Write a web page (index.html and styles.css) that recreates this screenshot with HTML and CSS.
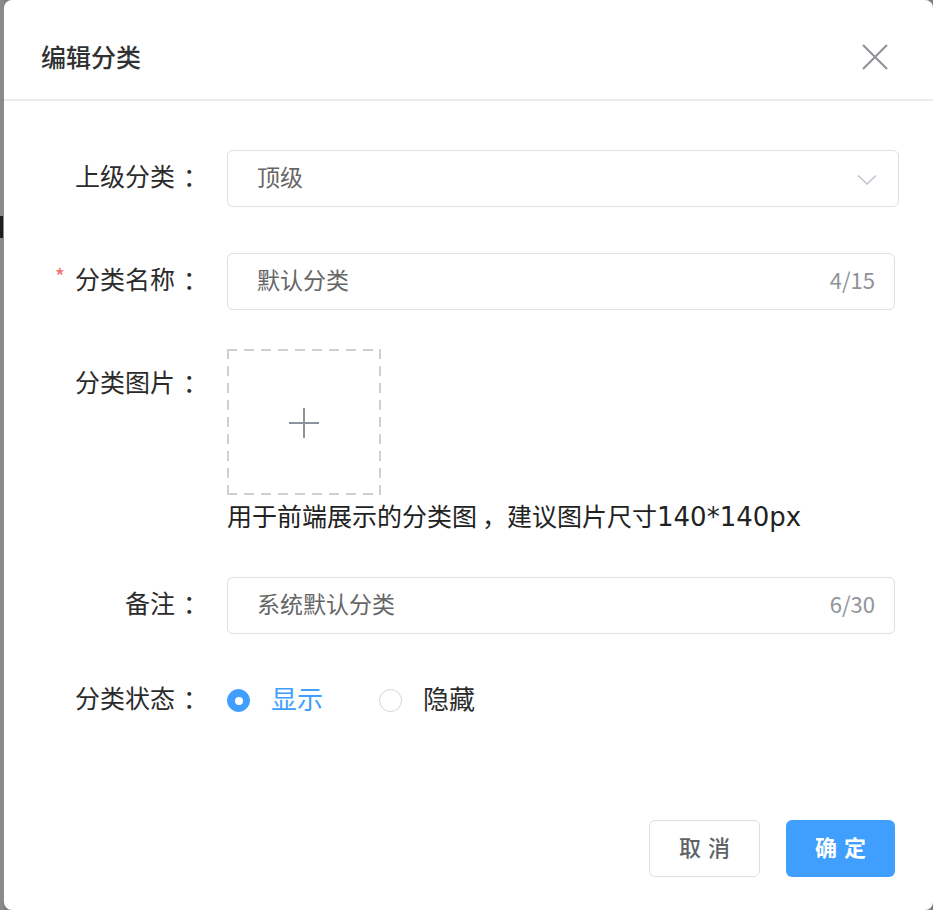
FILE: index.html
```html
<!DOCTYPE html>
<html lang="zh-CN">
<head>
<meta charset="utf-8">
<title>编辑分类</title>
<link rel="stylesheet" href="styles.css">
</head>
<body>
<div class="edge"><span class="edge-mark"></span></div>
<div class="dialog">
  <div class="dialog-header">
    <span class="dialog-title">编辑分类</span>
    <svg class="close" width="26" height="26" viewBox="0 0 26 26"><path d="M1 1 L25 25 M25 1 L1 25" stroke="#8e9096" stroke-width="2" fill="none"/></svg>
  </div>
  <div class="form">
    <div class="row">
      <div class="label">上级分类<span class="colon">：</span></div>
      <div class="select">
        <span class="value">顶级</span>
        <svg class="chevron" width="20" height="12" viewBox="0 0 20 12"><path d="M1 1.5 L10 10 L19 1.5" stroke="#c0c4cc" stroke-width="1.6" fill="none"/></svg>
      </div>
    </div>
    <div class="row row-2">
      <div class="label"><span class="req">*</span>分类名称<span class="colon">：</span></div>
      <div class="input">
        <span class="value">默认分类</span>
        <span class="count">4/15</span>
      </div>
    </div>
    <div class="row row-3">
      <div class="label label-top">分类图片<span class="colon">：</span></div>
      <div class="upload-wrap">
        <div class="upload">
          <svg width="32" height="32" viewBox="0 0 32 32"><path d="M16 1 V31 M1 16 H31" stroke="#8c939d" stroke-width="2" fill="none"/></svg>
        </div>
        <div class="hint">用于前端展示的分类图<span class="comma">，</span>建议图片尺寸<span class="latin">140*140px</span></div>
      </div>
    </div>
    <div class="row row-4">
      <div class="label">备注<span class="colon">：</span></div>
      <div class="input">
        <span class="value">系统默认分类</span>
        <span class="count">6/30</span>
      </div>
    </div>
    <div class="row row-5">
      <div class="label">分类状态<span class="colon">：</span></div>
      <div class="radios">
        <div class="radio checked"><span class="dot"></span><span class="radio-text">显示</span></div>
        <div class="radio"><span class="dot"></span><span class="radio-text">隐藏</span></div>
      </div>
    </div>
  </div>
  <div class="footer">
    <button class="btn btn-cancel">取消</button>
    <button class="btn btn-ok">确定</button>
  </div>
</div>
</body>
</html>
```

FILE: styles.css
```css
* { box-sizing: border-box; }
html, body { margin: 0; padding: 0; }
body {
  width: 933px;
  height: 910px;
  overflow: hidden;
  display: flex;
  background: #7d7d7d;
  font-family: "Noto Sans CJK SC", "Liberation Sans", sans-serif;
  color: #2b2b2b;
}
.edge {
  width: 4px;
  flex: none;
  display: flex;
  flex-direction: column;
  padding-top: 216px;
  background: #8a8a8a;
}
.edge-mark {
  display: block;
  width: 3px;
  height: 22px;
  background: #1e1e1e;
}
.dialog {
  flex: 1;
  height: 910px;
  background: #fff;
  border-radius: 8px;
  display: flex;
  flex-direction: column;
}
.dialog-header {
  height: 101px;
  flex: none;
  border-bottom: 2px solid #ebebeb;
  display: flex;
  align-items: center;
  justify-content: space-between;
  padding: 12px 45px 0 37px;
}
.dialog-title {
  font-size: 25px;
  color: #303133;
  font-weight: 500;
}
.close { display: block; margin-top: 2px; }
.form { padding-top: 49px; }
.row {
  display: flex;
  align-items: flex-start;
}
.row-2 { margin-top: 46px; }
.row-3 { margin-top: 39px; }
.row-4 { margin-top: 43px; }
.row-5 { margin-top: 38px; }
.label {
  width: 196px;
  height: 57px;
  flex: none;
  margin-right: 27px;
  text-align: right;
  font-size: 25px;
  line-height: 51px;
  color: #2b2b2b;
  white-space: nowrap;
}
.colon {
  display: inline-block;
  width: 25px;
  text-indent: 8px;
  text-align: left;
}
.label-top { padding-top: 7px; }
.req {
  color: #f56c6c;
  font-size: 22px;
  margin-right: 10px;
  position: relative;
  top: -4px;
}
.select, .input {
  height: 57px;
  border: 1.5px solid #dcdfe6;
  border-radius: 6px;
  display: flex;
  align-items: center;
  justify-content: space-between;
  padding: 0 19px 5px 29px;
}
.select { width: 672px; padding-right: 21px; }
.input { width: 668px; }
.value {
  font-size: 23px;
  color: #666;
}
.chevron { display: block; margin-top: 8px; }
.count {
  font-size: 22px;
  color: #909399;
}
.upload-wrap {
  display: flex;
  flex-direction: column;
}
.upload {
  width: 154px;
  height: 146px;
  display: flex;
  align-items: center;
  justify-content: center;
  background:
    repeating-linear-gradient(90deg, #cfcfcf 0 10px, transparent 10px 17px) top left / 100% 2px no-repeat,
    repeating-linear-gradient(90deg, #cfcfcf 0 10px, transparent 10px 17px) bottom left / 100% 2px no-repeat,
    repeating-linear-gradient(180deg, #cfcfcf 0 10px, transparent 10px 17px) top left / 2px 100% no-repeat,
    repeating-linear-gradient(180deg, #cfcfcf 0 10px, transparent 10px 17px) top right / 2px 100% no-repeat;
}
.upload svg { display: block; margin-top: 2px; }
.hint {
  margin-top: 1px;
  height: 38px;
  font-size: 25px;
  line-height: 38px;
  color: #222;
  white-space: nowrap;
}
.comma {
  display: inline-block;
  width: 30px;
  text-indent: 5px;
}
.latin {
  font-family: "DejaVu Sans", sans-serif;
  font-size: 26px;
  line-height: 1;
}
.radios {
  height: 57px;
  display: flex;
  align-items: center;
}
.radio {
  display: flex;
  align-items: center;
  gap: 21px;
}
.radio + .radio { margin-left: 56px; }
.dot {
  width: 23px;
  height: 23px;
  border-radius: 50%;
  border: 1.5px solid #d3d6dc;
  background: #fff;
  display: flex;
  align-items: center;
  justify-content: center;
}
.radio.checked .dot {
  background: #409eff;
  border-color: #409eff;
}
.radio.checked .dot::after {
  content: "";
  width: 8px;
  height: 8px;
  border-radius: 50%;
  background: #fff;
}
.radio-text {
  font-size: 26px;
  line-height: 30px;
  margin-top: -5px;
  color: #2b2b2b;
}
.radio.checked .radio-text { color: #409eff; }
.footer {
  margin-top: auto;
  display: flex;
  justify-content: flex-end;
  gap: 26px;
  padding: 0 38px 33px 0;
}
.btn {
  height: 57px;
  border-radius: 6px;
  font-family: "Noto Sans CJK SC", sans-serif;
  font-size: 22px;
  letter-spacing: 7px;
  padding: 0 0 5px 7px;
  cursor: pointer;
}
.btn-cancel {
  width: 111px;
  background: #fff;
  border: 1.5px solid #dcdfe6;
  color: #606266;
  font-weight: 500;
}
.btn-ok {
  width: 109px;
  background: #409eff;
  border: none;
  color: #fff;
  font-weight: 700;
}
```
